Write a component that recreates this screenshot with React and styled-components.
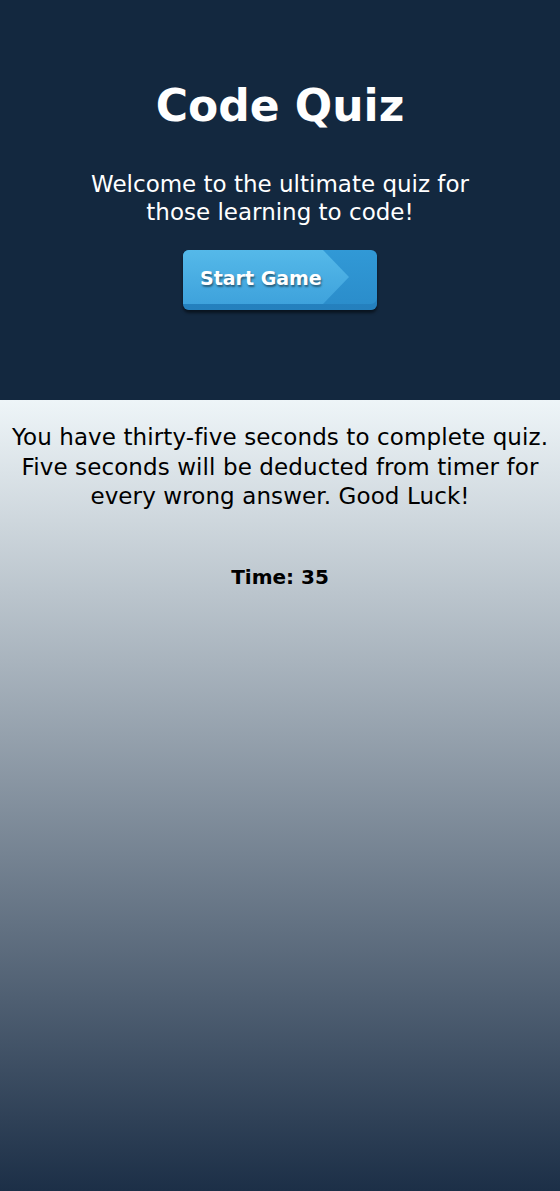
import React from "react";
import styled, { createGlobalStyle } from "styled-components";

const GlobalStyle = createGlobalStyle`
  html, body {
    margin: 0;
    padding: 0;
  }
  body {
    font-family: "DejaVu Sans", "Liberation Sans", sans-serif;
    background: #1c2f47;
  }
`;

const Page = styled.div`
  min-height: 1191px;
  display: flex;
  flex-direction: column;
`;

const Header = styled.header`
  height: 400px;
  flex-shrink: 0;
  box-sizing: border-box;
  background-color: #13283f;
  color: #fff;
  display: flex;
  flex-direction: column;
  align-items: center;
  padding-top: 78px;
`;

const Title = styled.h1`
  margin: 0;
  font-size: 44px;
  line-height: 56px;
  font-weight: 700;
`;

const Subtitle = styled.p`
  margin: 36px 0 0;
  width: 420px;
  text-align: center;
  font-size: 23px;
  line-height: 28px;
`;

const StartButton = styled.button`
  position: relative;
  margin-top: 24px;
  width: 194px;
  height: 60px;
  border: none;
  border-radius: 6px;
  padding: 0 0 4px 17px;
  text-align: left;
  font-family: inherit;
  font-size: 19px;
  font-weight: 700;
  color: #fff;
  text-shadow: 1px 2px 2px rgba(0, 0, 0, 0.45);
  background: linear-gradient(#3199d6, #2a8cca);
  box-shadow: inset 0 -6px 0 rgba(20, 90, 150, 0.25), 0 3px 3px rgba(0, 0, 0, 0.5);
  overflow: hidden;
  cursor: pointer;

  &::before {
    content: "";
    position: absolute;
    inset: 0 0 6px 0;
    background: linear-gradient(#55b9e9, #3ea2dc);
    clip-path: polygon(0 0, 140px 0, 166px 50%, 140px 100%, 0 100%);
  }

  span {
    position: relative;
  }
`;

const Content = styled.main`
  flex: 1;
  display: flex;
  flex-direction: column;
  align-items: center;
  padding: 23px 8px 0;
  background: linear-gradient(#eef5f8, #1c2f47);
`;

const Rules = styled.p`
  margin: 0;
  text-align: center;
  font-size: 23px;
  line-height: 29.5px;
  letter-spacing: 0.1px;
  color: #000;
`;

const Timer = styled.p`
  margin: 53px 0 0;
  font-size: 20px;
  font-weight: 700;
  color: #000;
`;

export default function App() {
  return (
    <Page>
      <GlobalStyle />
      <Header>
        <Title>Code Quiz</Title>
        <Subtitle>Welcome to the ultimate quiz for those learning to code!</Subtitle>
        <StartButton>
          <span>Start Game</span>
        </StartButton>
      </Header>
      <Content>
        <Rules>
          You have thirty-five seconds to complete quiz.
          <br />
          Five seconds will be deducted from timer for
          <br />
          every wrong answer. Good Luck!
        </Rules>
        <Timer>Time: 35</Timer>
      </Content>
    </Page>
  );
}
